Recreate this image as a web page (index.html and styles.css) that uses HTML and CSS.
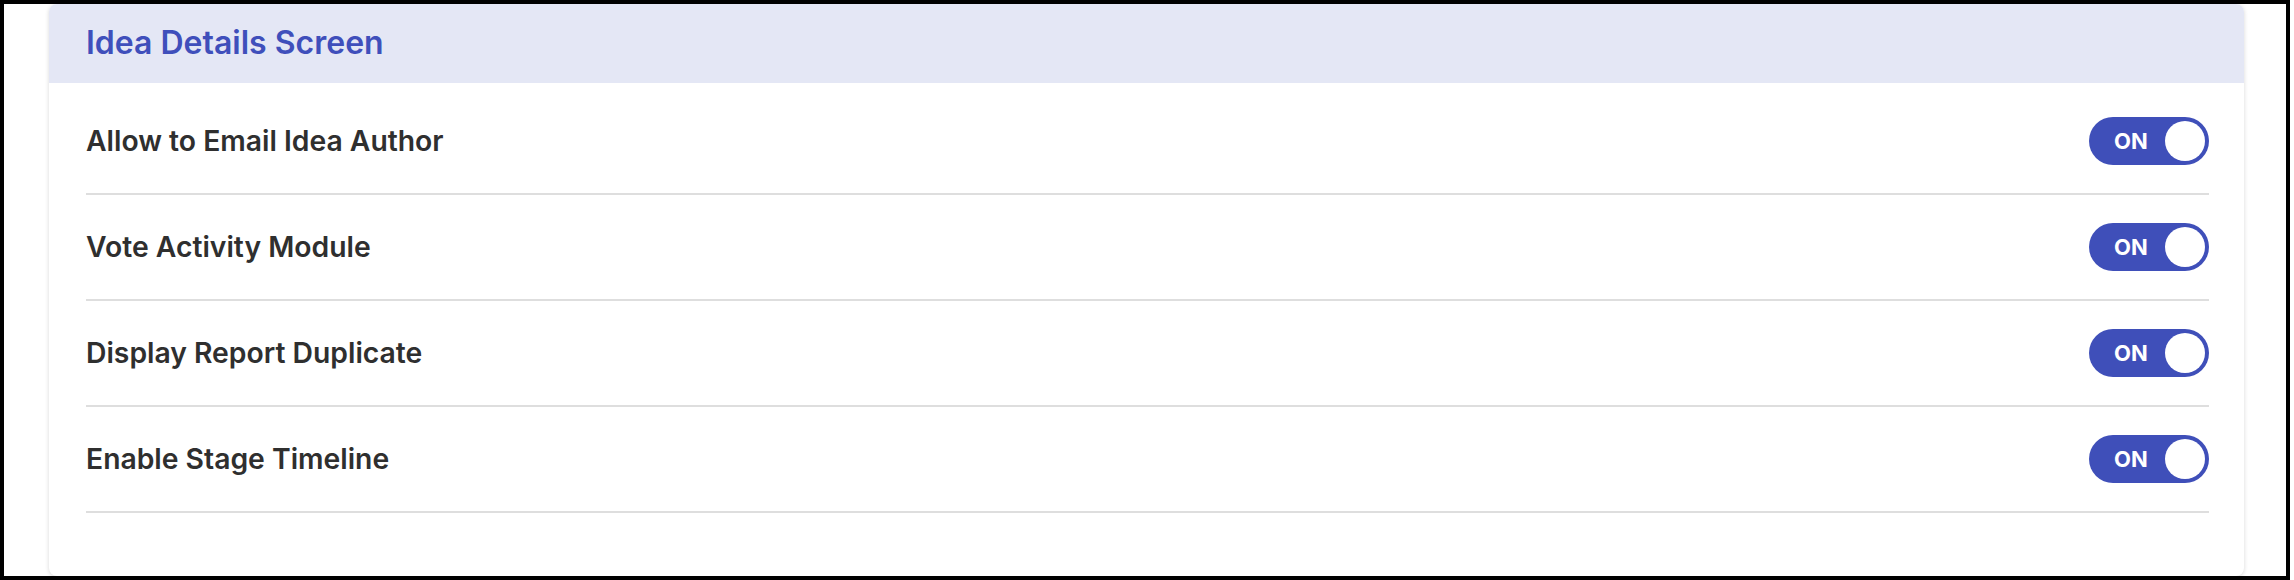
FILE: index.html
```html
<!DOCTYPE html>
<html>
<head>
    <meta charset="UTF-8">
    <title>Idea Details Screen</title>
    <link rel="stylesheet" href="styles.css">
</head>
<body>
<div class="frame">
    <div class="card">
        <div class="card-header">
            <span class="card-title">Idea Details Screen</span>
        </div>
        <ul class="settings">
            <li class="setting">
                <span class="setting-label">Allow to Email Idea Author</span>
                <span class="switch"><span class="switch-text">ON</span><span class="switch-knob"></span></span>
            </li>
            <li class="setting">
                <span class="setting-label">Vote Activity Module</span>
                <span class="switch"><span class="switch-text">ON</span><span class="switch-knob"></span></span>
            </li>
            <li class="setting">
                <span class="setting-label">Display Report Duplicate</span>
                <span class="switch"><span class="switch-text">ON</span><span class="switch-knob"></span></span>
            </li>
            <li class="setting">
                <span class="setting-label">Enable Stage Timeline</span>
                <span class="switch"><span class="switch-text">ON</span><span class="switch-knob"></span></span>
            </li>
        </ul>
    </div>
</div>
</body>
</html>
```

FILE: styles.css
```css
/* reset */
* {
    margin: 0;
    padding: 0;
    list-style: none;
    box-sizing: border-box;
    font-family: Inter, "Noto Sans", sans-serif;
}
body {
    width: 2294px;
    height: 580px;
    background: #fff;
    overflow: hidden;
}
.frame {
    width: 2290px;
    height: 580px;
    border: 4px solid #000;
    padding: 0 42px 0 45px;
}
.card {
    height: 572px;
    background: #fff;
    border-radius: 8px;
    overflow: hidden;
    box-shadow: 0 1px 4px rgba(0, 0, 0, 0.16);
}
.card-header {
    height: 79px;
    background: #e4e7f5;
    padding: 0 35px 3px 37px;
    display: flex;
    align-items: center;
}
.card-title {
    color: #3f4fbb;
    font-size: 32px;
    font-weight: 600;
}
.settings {
    padding: 6px 35px 0 37px;
}
.setting {
    height: 106px;
    border-bottom: 2px solid #dedede;
    display: flex;
    align-items: center;
    justify-content: space-between;
}
.setting-label {
    color: #2f2f2f;
    font-size: 28.3px;
    font-weight: 600;
}
.switch {
    width: 120px;
    height: 48px;
    border-radius: 24px;
    background: #3f4fb9;
    display: flex;
    align-items: center;
    padding: 0 4px 0 25px;
}
.switch-text {
    flex: 1;
    color: #fff;
    font-size: 22px;
    font-weight: 700;
}
.switch-knob {
    width: 40px;
    height: 40px;
    border-radius: 50%;
    background: #fff;
}
```
